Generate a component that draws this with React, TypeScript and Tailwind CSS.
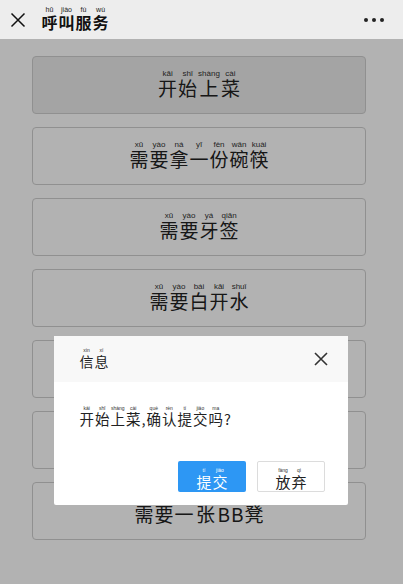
import React from "react";

type Syl = [string, string];

const rows: Syl[][] = [
  [["开", "kāi"], ["始", "shǐ"], ["上", "shàng"], ["菜", "cài"]],
  [["需", "xū"], ["要", "yào"], ["拿", "ná"], ["一", "yī"], ["份", "fèn"], ["碗", "wǎn"], ["筷", "kuài"]],
  [["需", "xū"], ["要", "yào"], ["牙", "yá"], ["签", "qiān"]],
  [["需", "xū"], ["要", "yào"], ["白", "bái"], ["开", "kāi"], ["水", "shuǐ"]],
  [["需", "xū"], ["要", "yào"], ["纸", "zhǐ"], ["巾", "jīn"]],
  [["需", "xū"], ["要", "yào"], ["结", "jié"], ["账", "zhàng"]],
  [["需", "xū"], ["要", "yào"], ["一", "yī"], ["张", "zhāng"], ["B", ""], ["B", ""], ["凳", "dèng"]],
];

const cjk = "font-['Noto_Sans_CJK_SC','Noto_Sans',sans-serif]";

function Ruby({ text, rt = "text-[7px] text-[#333]" }: { text: Syl[]; rt?: string }) {
  return (
    <span className="leading-none">
      {text.map(([c, p], i) => (
        <ruby key={i} className="mx-[0.5px]">
          {c}
          <rt className={`${rt} font-['Liberation_Sans',sans-serif] font-normal leading-none pb-[1px]`}>
            {p}
          </rt>
        </ruby>
      ))}
    </span>
  );
}

export default function App() {
  return (
    <div className={`w-[403px] h-[584px] flex flex-col overflow-hidden ${cjk}`}>
      {/* top bar */}
      <div className="h-[39px] bg-[#ededed] flex items-center px-[10px] shrink-0">
        <svg width="16" height="16" viewBox="0 0 16 16" className="text-[#111]">
          <path d="M1.5 1.5 L14.5 14.5 M14.5 1.5 L1.5 14.5" stroke="currentColor" strokeWidth="1.5" />
        </svg>
        <div className="ml-[15px] text-[16px] font-bold text-[#111] pt-[1px]">
          <Ruby text={[["呼", "hū"], ["叫", "jiào"], ["服", "fú"], ["务", "wù"]]} rt="text-[7px] text-[#222]" />
        </div>
        <div className="ml-auto flex gap-[4px] pr-[9px]">
          <span className="w-[4px] h-[4px] rounded-full bg-[#222]" />
          <span className="w-[4px] h-[4px] rounded-full bg-[#222]" />
          <span className="w-[4px] h-[4px] rounded-full bg-[#222]" />
        </div>
      </div>

      {/* list */}
      <div className="relative flex-1 bg-white">
        <div className="flex flex-col gap-[13px] pl-[32px] pr-[37px] pt-[17px]">
          {rows.map((r, i) => (
            <div
              key={i}
              className={`h-[58px] rounded-[4px] border border-[#cfcfcf] flex items-center justify-center pb-[4px] text-[19px] text-[#222] ${
                i === 0 ? "bg-[#ebebeb]" : "bg-white"
              }`}
            >
              <Ruby text={r} rt="text-[8px] text-[#333]" />
            </div>
          ))}
        </div>

        {/* overlay */}
        <div className="absolute inset-0 bg-black/30" />

        {/* dialog */}
        <div className="absolute left-[54px] top-[297px] w-[294px] h-[169px] bg-white rounded-[2px] flex flex-col">
          <div className="h-[46px] bg-[#f8f8f8] flex items-center pl-[25px] pr-[20px]">
            <div className="text-[14px] text-[#222] pt-[4px]">
              <Ruby text={[["信", "xìn"], ["息", "xī"]]} rt="text-[5px] text-[#333]" />
            </div>
            <svg width="14" height="14" viewBox="0 0 14 14" className="ml-auto text-[#333]">
              <path d="M1 1 L13 13 M13 1 L1 13" stroke="currentColor" strokeWidth="1.6" />
            </svg>
          </div>
          <div className="pl-[25px] pt-[26px] text-[14.5px] text-[#222]">
            <Ruby
              text={[
                ["开", "kāi"], ["始", "shǐ"], ["上", "shàng"], ["菜", "cài"], [",", ""],
                ["确", "què"], ["认", "rèn"], ["提", "tí"], ["交", "jiāo"], ["吗", "ma"], ["?", ""],
              ]}
              rt="text-[5px] text-[#333]"
            />
          </div>
          <div className="mt-auto mb-[13px] flex justify-end gap-[11px] pr-[23px]">
            <button className="w-[68px] h-[31px] rounded-[2px] bg-[#2d97f4] text-white text-[15px] flex items-center justify-center pt-[3px]">
              <Ruby text={[["提", "tí"], ["交", "jiāo"]]} rt="text-[5px] text-white" />
            </button>
            <button className="w-[68px] h-[31px] rounded-[2px] bg-white border border-[#dcdcdc] text-[#222] text-[15px] flex items-center justify-center pt-[3px]">
              <Ruby text={[["放", "fàng"], ["弃", "qì"]]} rt="text-[5px] text-[#333]" />
            </button>
          </div>
        </div>
      </div>
    </div>
  );
}
